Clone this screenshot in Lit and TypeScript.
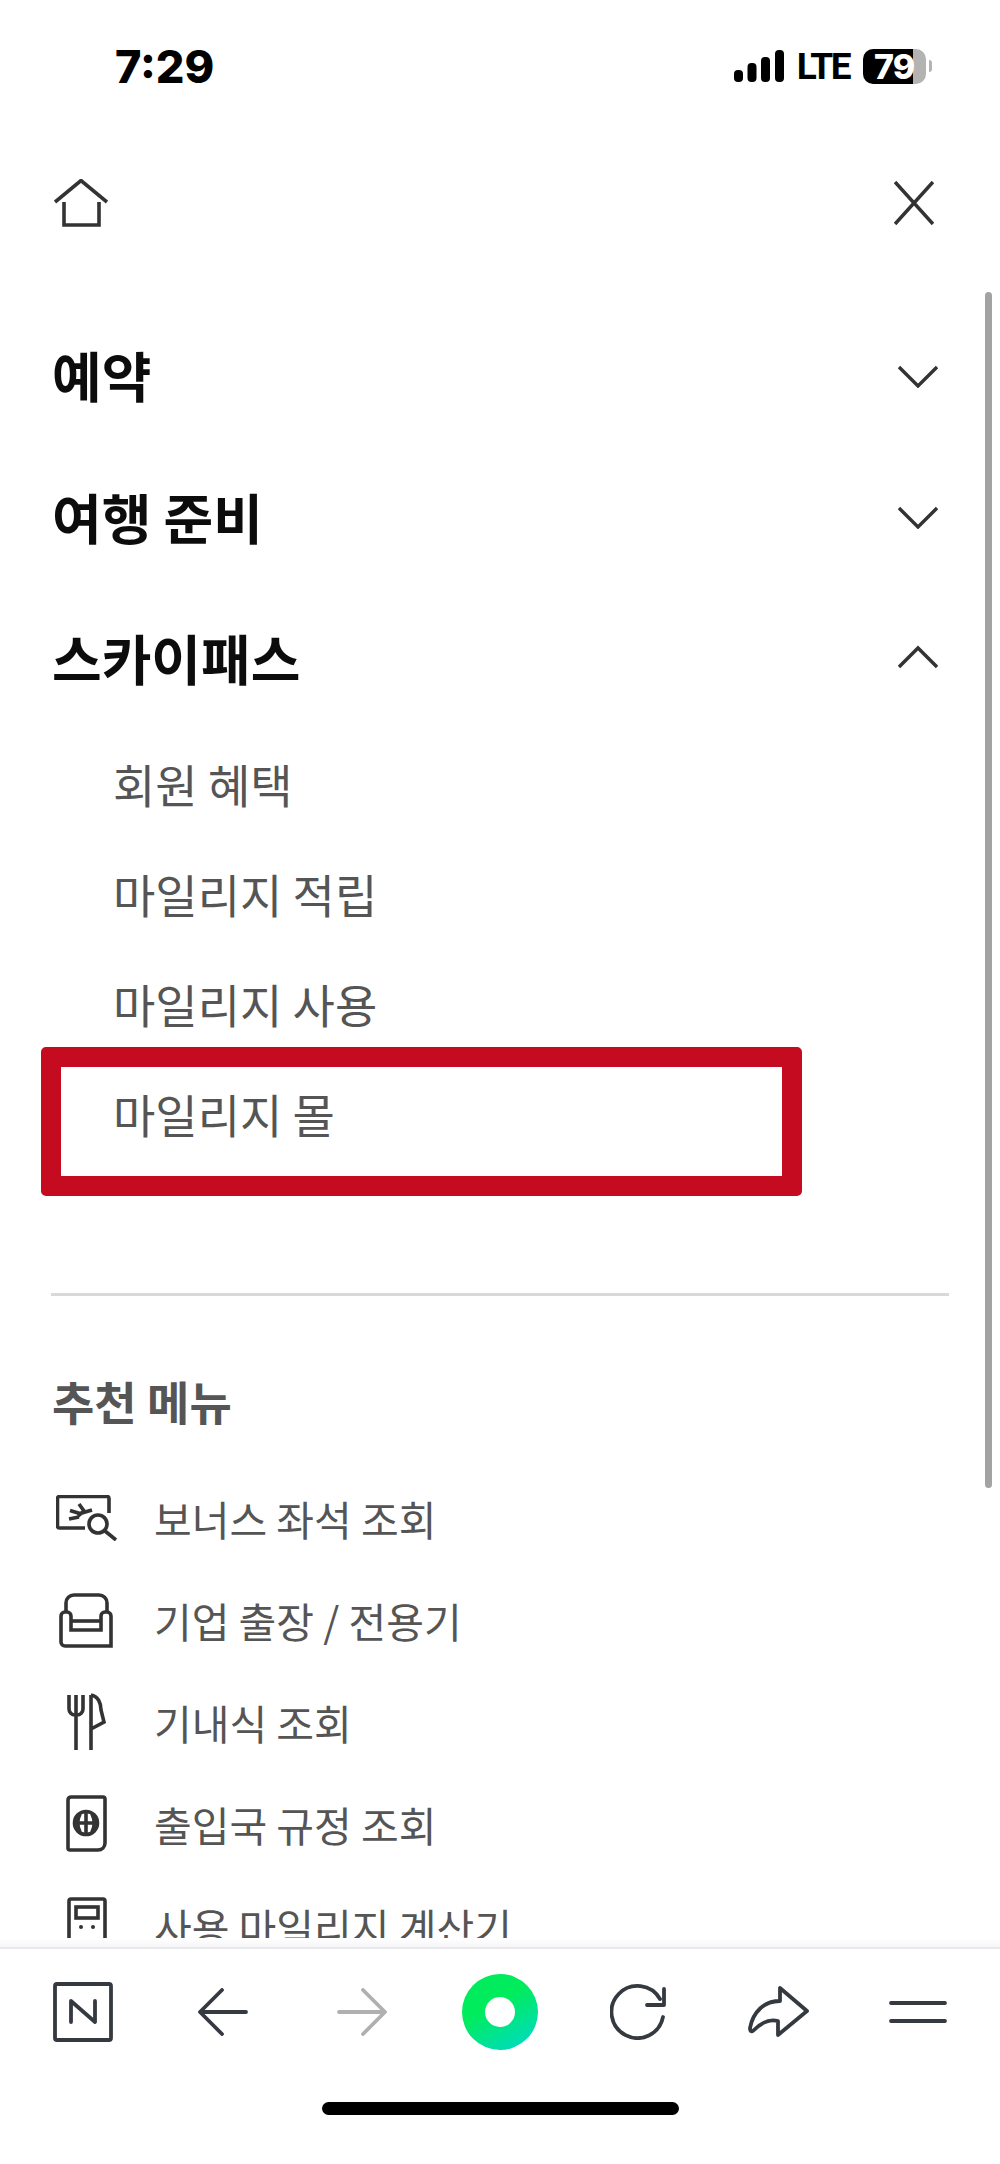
import { LitElement, html, css, svg } from "lit";
import { customElement } from "lit/decorators.js";

const chevDown = html`<svg class="chev" viewBox="0 0 40 26"><path d="M1 5 L20 24 L39 5" /></svg>`;
const chevUp = html`<svg class="chev" viewBox="0 0 40 26"><path d="M1 22 L20 3 L39 22" /></svg>`;

const icons = [
  svg`<path d="M29 33H3.5a2 2 0 0 1-2-2V3.5a2 2 0 0 1 2-2H51a2 2 0 0 1 2 2V18"/>
      <circle cx="42" cy="29" r="9"/><path d="M49 36L60 45"/>
      <path d="M14 15.5l10 3 12-3.5M23 9l5 7-6 5M13 24l10-2" stroke-width="2.6"/>`,
  svg`<path d="M7 20V11a8 8 0 0 1 8-8h25a8 8 0 0 1 8 8v9"/>
      <path d="M2 24a4 4 0 0 1 4-4h2a4 4 0 0 1 4 4v14h30V24a4 4 0 0 1 4-4h2a4 4 0 0 1 4 4v30H6a4 4 0 0 1-4-4z"/>
      <path d="M12 29h30"/>`,
  svg`<path d="M2 3v14a6 6 0 0 0 6 6h2a6 6 0 0 0 6-6V3M9 3v55"/>
      <path d="M24 3v55M24 3c7 1 10 8 10 15l3 12-13 7" />`,
  svg`<path d="M5 2h32a2 2 0 0 1 2 2v44c0 4-3 7-7 7H4a2 2 0 0 1-2-2V5a3 3 0 0 1 3-3z"/>
      <circle cx="20" cy="28" r="11.5" stroke-width="4"/><path d="M20 17v22M9 28h22M14 19c-3 6-3 12 0 18M26 19c3 6 3 12 0 18" stroke-width="2.4"/>`,
  svg`<path d="M4 2h32a2 2 0 0 1 2 2v52H2V4a2 2 0 0 1 2-2z"/><rect x="9" y="10" width="22" height="11"/>
      <circle cx="14" cy="30" r="2" fill="#333" stroke="none"/><circle cx="26" cy="30" r="2" fill="#333" stroke="none"/>`,
];

const recs: [string, number, number][] = [
  ["보너스 좌석 조회", 62, 46],
  ["기업 출장 / 전용기", 56, 56],
  ["기내식 조회", 40, 60],
  ["출입국 규정 조회", 42, 57],
  ["사용 마일리지 계산기", 40, 58],
];

@customElement("app-root")
export class AppRoot extends LitElement {
  static styles = css`
    :host {
      display: flex;
      flex-direction: column;
      position: relative;
      width: 1000px;
      height: 2164px;
      overflow: hidden;
      background: #fff;
      font-family: "Noto Sans CJK KR", "Noto Sans", sans-serif;
    }
    svg { display: block; fill: none; }
    .main { flex: 1; min-height: 0; overflow: hidden; }
    .status {
      height: 132px;
      display: flex;
      align-items: center;
      justify-content: space-between;
      padding: 0 68px 0 115px;
      box-sizing: border-box;
    }
    .time {
      font: 800 45px/1 "Inter", "Liberation Sans", sans-serif;
      color: #000;
    }
    .sys { display: flex; align-items: center; }
    .lte {
      font: 700 37px/1 "Roboto", "Liberation Sans", sans-serif;
      color: #000;
      margin: 0 14px 0 13px;
      letter-spacing: -2.5px;
    }
    .battery {
      width: 63px;
      height: 35px;
      border-radius: 10px;
      background: linear-gradient(to right, #000 0 50px, #b3b3b3 50px);
      color: #fff;
      font: 800 34px/35px "Inter", "Liberation Sans", sans-serif;
      letter-spacing: -1px;
      padding-left: 11px;
      box-sizing: border-box;
    }
    .nub { width: 3px; height: 12px; background: #b3b3b3; border-radius: 0 3px 3px 0; margin-left: 3px; }
    .top {
      height: 142px;
      display: flex;
      align-items: center;
      justify-content: space-between;
      padding: 0 66px 0 54px;
      box-sizing: border-box;
      margin-bottom: 30px;
    }
    .top svg path { stroke: #333; stroke-width: 3.6; }
    .acc {
      height: 141.5px;
      display: flex;
      align-items: center;
      justify-content: space-between;
      padding: 0 62px 0 52px;
      font-size: 54px;
      font-weight: 700;
      color: #0c0c0c;
    }
    .chev { width: 40px; height: 26px; }
    .chev path { stroke: #333; stroke-width: 3.4; }
    .sub {
      position: relative;
      height: 110px;
      line-height: 108px;
      padding-left: 113px;
      font-size: 46px;
      color: #555;
    }
    .mark {
      position: absolute;
      left: 41px;
      top: -12px;
      width: 761px;
      height: 149px;
      box-sizing: border-box;
      border: 20px solid #c40b20;
      border-radius: 5px;
      pointer-events: none;
    }
    hr {
      margin: 124px 51px 0 51px;
      border: 0;
      height: 3px;
      background: #d9d9d9;
    }
    .rec-title {
      margin: 74px 0 0 52px;
      font-size: 46px;
      line-height: 60px;
      font-weight: 700;
      color: #555;
    }
    .rec-list { margin-top: 37px; }
    .rec {
      height: 102px;
      display: flex;
      align-items: center;
      font-size: 41px;
      color: #555;
    }
    .rec .ic { width: 154px; flex: none; display: flex; justify-content: center; padding-left: 20px; box-sizing: border-box; }
    .rec svg * { stroke: #333; stroke-width: 3.6; }
    .rec svg circle[stroke="none"] { stroke: none; }
    .bar {
      flex: none;
      height: 226px;
      box-sizing: border-box;
      background: #fff;
    }
    .fade { height: 9px; background: linear-gradient(#fff, #f6f6f8); border-bottom: 2px solid #e8e8ed; }
    .tools {
      display: grid;
      grid-template-columns: repeat(7, 139px);
      padding: 25px 0 0 13px;
      height: 76px;
      align-items: center;
      justify-items: center;
    }
    .tools svg .s { stroke: #343a40; stroke-width: 3.8; stroke-linecap: round; stroke-linejoin: round; }
    .tools svg .g { stroke: #b0b0b0; stroke-width: 3.8; stroke-linecap: round; stroke-linejoin: round; }
    .nudge { margin-left: 3px; }
    .logo {
      width: 76px;
      height: 76px;
      border-radius: 50%;
      background: linear-gradient(150deg, #00ec5c 40%, #00d8d0 100%);
      display: flex;
      align-items: center;
      justify-content: center;
    }
    .logo i { width: 30px; height: 30px; border-radius: 50%; background: #fff; display: block; }
    .home-ind {
      width: 357px;
      height: 13px;
      border-radius: 7px;
      background: #000;
      margin: 52px auto 0 auto;
    }
    .scrollbar {
      position: absolute;
      left: 985px;
      top: 292px;
      width: 7px;
      height: 1196px;
      border-radius: 4px;
      background: #a3a3a3;
    }
  `;

  render() {
    return html`
      <div class="main">
        <div class="status">
          <div class="time">7:29</div>
          <div class="sys">
            <svg width="50" height="34" viewBox="0 0 50 34">
              <rect x="0" y="21" width="9" height="12" rx="4" fill="#000" />
              <rect x="13.5" y="14" width="9" height="19" rx="4" fill="#000" />
              <rect x="27" y="8" width="9" height="25" rx="4" fill="#000" />
              <rect x="41" y="1" width="9" height="32" rx="4" fill="#000" />
            </svg>
            <span class="lte">LTE</span>
            <div class="battery">79</div>
            <div class="nub"></div>
          </div>
        </div>
        <div class="top">
          <svg width="54" height="48" viewBox="0 0 54 48">
            <path d="M1 23 L27 1.5 L53 23 M10 23 V46 H45 V23" />
          </svg>
          <svg width="40" height="44" viewBox="0 0 40 44">
            <path d="M1 1 L39 43 M39 1 L1 43" />
          </svg>
        </div>
        <div class="acc"><span>예약</span> ${chevDown}</div>
        <div class="acc"><span>여행 준비</span> ${chevDown}</div>
        <div class="acc"><span>스카이패스</span> ${chevUp}</div>
        <div class="sub">회원 혜택</div>
        <div class="sub">마일리지 적립</div>
        <div class="sub">마일리지 사용</div>
        <div class="sub">마일리지 몰<div class="mark"></div></div>
        <hr />
        <div class="rec-title">추천 메뉴</div>
        <div class="rec-list">
          ${recs.map(
            ([t, w, h], i) => html`<div class="rec">
              <div class="ic">
                <svg width=${w} height=${h} viewBox="0 0 ${w} ${h}">${icons[i]}</svg>
              </div>
              ${t}
            </div>`
          )}
        </div>
      </div>
      <div class="bar">
        <div class="fade"></div>
        <div class="tools">
          <svg width="60" height="60" viewBox="0 0 60 60">
            <rect class="s" x="2" y="2" width="56" height="56" rx="2" />
            <path class="s" d="M18 40V19L42 40V19" />
          </svg>
          <svg class="nudge" width="50" height="48" viewBox="0 0 50 48">
            <path class="s" d="M48 24H3M24 2L2 24L24 46" />
          </svg>
          <svg class="nudge" width="50" height="48" viewBox="0 0 50 48">
            <path class="g" d="M2 24H47M26 2L48 24L26 46" />
          </svg>
          <div class="logo"><i></i></div>
          <svg width="58" height="56" viewBox="0 0 58 56">
            <path class="s" d="M53 33A26 26 0 1 1 50 15" />
            <path class="s" d="M54 5V21H37" />
          </svg>
          <svg width="62" height="52" viewBox="0 0 62 52">
            <path class="s" d="M33 2V15C17 15 6 26 3 42C3 46 5 46 7 44C15 36 24 33 31 35V49L60 25Z" />
          </svg>
          <svg class="nudge" width="58" height="24" viewBox="0 0 58 24">
            <path class="s" d="M2 3H56M2 21H56" />
          </svg>
        </div>
        <div class="home-ind"></div>
      </div>
      <div class="scrollbar"></div>
    `;
  }
}
